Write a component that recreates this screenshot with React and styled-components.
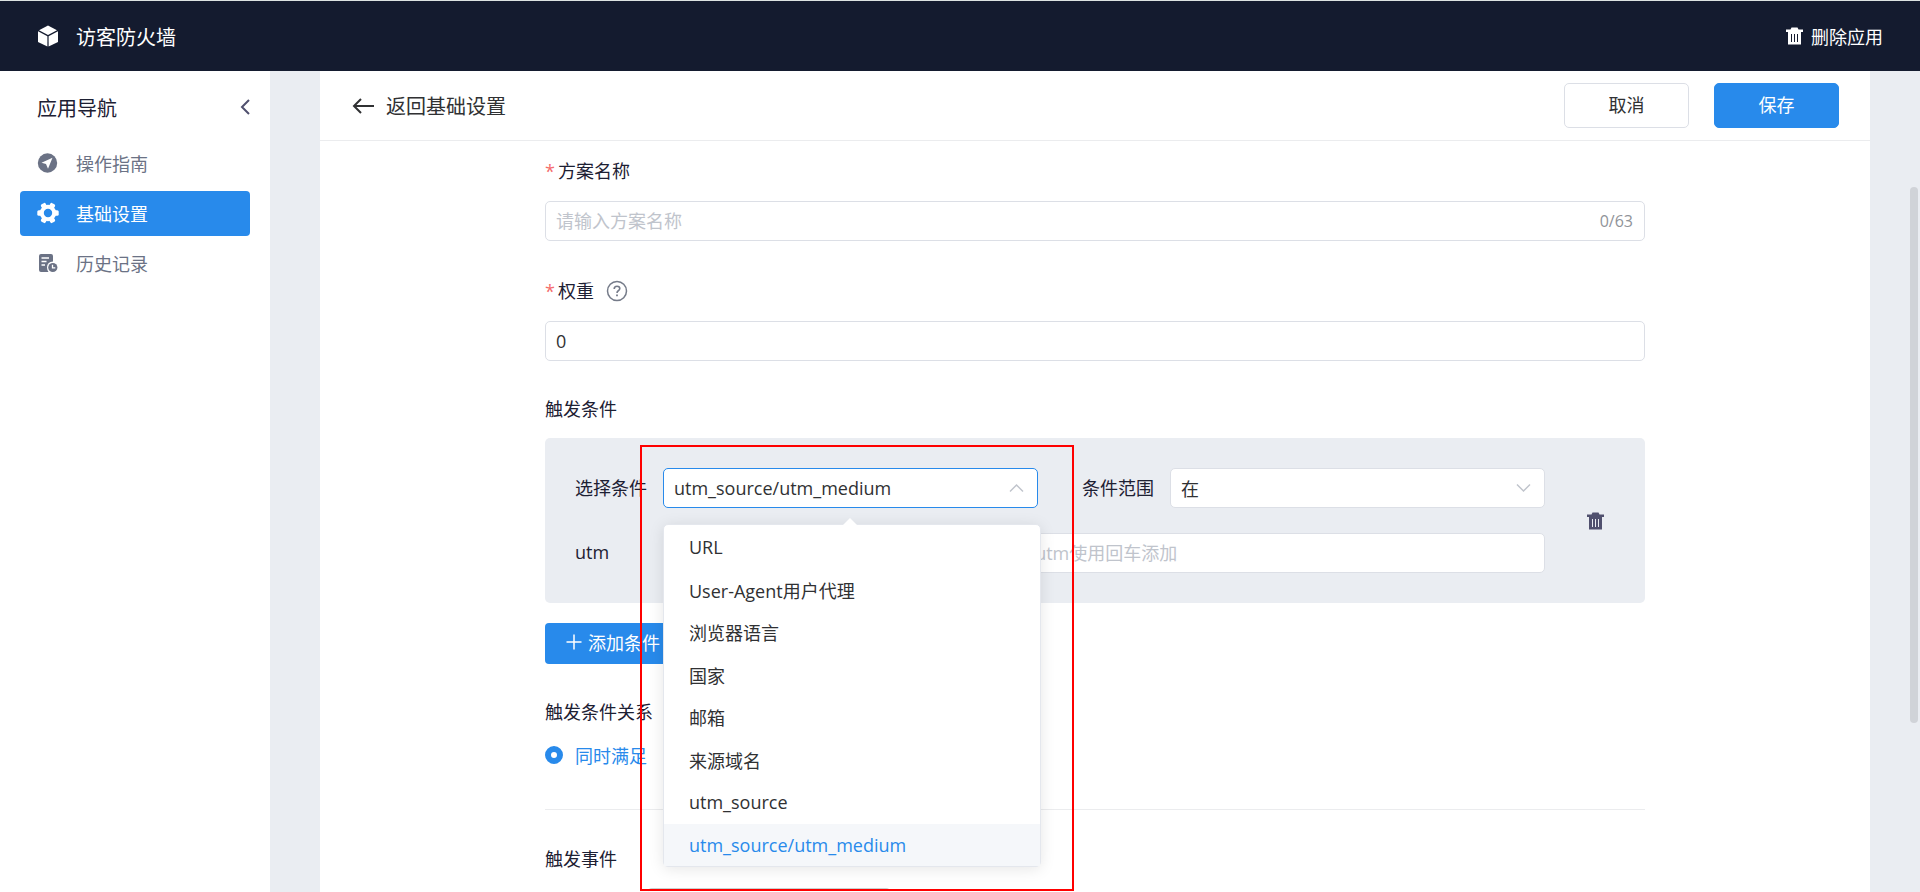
import React, { useState } from 'react';

import styled, { createGlobalStyle } from 'styled-components';

const GlobalStyle = createGlobalStyle`
  * {
    box-sizing: border-box;
  }

  body {
    margin: 0;
    overflow: hidden;
  }

  body, button, input {
    font-family: "Open Sans", "Noto Sans CJK SC", sans-serif;
    font-size: 18px;
    font-weight: 370;
    color: #1d2033;
  }
`;

const Page = styled.div`
  display: flex;
  flex-direction: column;
  height: 100vh;
  background: #eaedf2;
`;

const TopBar = styled.header`
  display: flex;
  flex: none;
  align-items: center;
  justify-content: space-between;
  height: 71px;
  padding: 0 37px;
  border-top: 1px solid #dde3e2;
  background: #141b2f;
  color: #fff;
`;

const Brand = styled.div`
  display: flex;
  align-items: center;
  gap: 17px;
  font-size: 20px;
`;

const PlainButton = styled.button`
  display: flex;
  align-items: center;
  gap: 8px;
  padding: 0;
  border: none;
  background: transparent;
  color: ${(props) => props.$color || 'inherit'};
  cursor: pointer;
`;

const Body = styled.div`
  display: flex;
  flex: 1;
  min-height: 0;
`;

const Sidebar = styled.nav`
  flex: none;
  width: 270px;
  padding: 17px 20px 0;
  background: #fff;
`;

const SidebarHead = styled.div`
  display: flex;
  align-items: center;
  justify-content: space-between;
  height: 38px;
  margin-bottom: 15px;
  padding-left: 17px;
  font-size: 20px;
`;

const NavLink = styled.a`
  display: flex;
  align-items: center;
  gap: 17px;
  height: 45px;
  margin-bottom: 5px;
  padding: 0 0 2px 17px;
  border-radius: 4px;
  background: ${(props) => (props.$active ? '#288aeb' : 'transparent')};
  color: ${(props) => (props.$active ? '#fff' : '#6b7285')};
  text-decoration: none;
`;

const Content = styled.main`
  position: relative;
  flex: 1;
  min-width: 0;
  padding: 0 50px;
`;

const Card = styled.section`
  height: 100%;
  overflow: hidden;
  background: #fff;
`;

const CardHead = styled.div`
  display: flex;
  align-items: center;
  justify-content: space-between;
  height: 70px;
  padding: 0 31px 0 32px;
  border-bottom: 1px solid #ebecee;
`;

const BackLink = styled.a`
  display: flex;
  align-items: center;
  gap: 12px;
  font-size: 20px;
  color: #303133;
  text-decoration: none;
`;

const Actions = styled.div`
  display: flex;
  gap: 25px;
`;

const ActionButton = styled.button`
  width: 125px;
  height: 45px;
  padding: 0 0 4px;
  border: 1px solid ${(props) => (props.$primary ? '#288aeb' : '#dcdfe6')};
  border-radius: 5px;
  background: ${(props) => (props.$primary ? '#288aeb' : '#fff')};
  color: ${(props) => (props.$primary ? '#fff' : '#303133')};
`;

const Form = styled.form`
  max-width: 1100px;
  margin: 0 auto;
  padding-top: 15px;
`;

const Field = styled.div`
  margin-bottom: ${(props) => props.$gap || 35}px;
`;

const LabelRow = styled.div`
  display: flex;
  align-items: center;
  gap: 12px;
  height: 30px;
  margin-bottom: 15px;
`;

const Label = styled.label`
  line-height: 30px;
`;

const Required = styled.span`
  margin-right: 3px;
  color: #f56c6c;
`;

const InputBox = styled.div`
  display: flex;
  flex: ${(props) => props.$flex || 'none'};
  align-items: center;
  min-width: 0;
  height: 40px;
  padding: 0 11px 0 10px;
  border: 1px solid ${(props) => (props.$focused ? '#288aeb' : '#dcdfe6')};
  border-radius: 5px;
  background: #fff;
  color: #c0c4cc;
`;

const TextInput = styled.input`
  flex: 1;
  min-width: 0;
  padding: 0;
  border: none;
  outline: none;
  background: transparent;
  color: #303133;

  &::placeholder {
    color: #c0c4cc;
  }
`;

const Counter = styled.span`
  font-size: 16px;
  color: #909399;
`;

const Conditions = styled.div`
  display: flex;
  align-items: center;
  gap: 42px;
  height: 165px;
  margin-bottom: 20px;
  padding: 0 41px 0 30px;
  border-radius: 5px;
  background: #eaedf2;
`;

const ConditionRows = styled.div`
  display: flex;
  flex: 1;
  flex-direction: column;
  gap: 25px;
`;

const ConditionRow = styled.div`
  display: flex;
  align-items: center;
`;

const ConditionLabel = styled.label`
  flex: none;
  width: 88px;
  padding-bottom: 2px;
`;

const SelectWrap = styled.div`
  position: relative;
  display: flex;
  flex: 1;
  margin-right: ${(props) => props.$gap || 0}px;
`;

const Menu = styled.ul`
  position: absolute;
  z-index: 2;
  top: 56px;
  left: 0;
  display: flex;
  flex-direction: column;
  width: 378px;
  height: 343px;
  margin: 0;
  padding: 1px 0 0;
  border: 1px solid #e4e7ed;
  border-radius: 5px;
  background: #fff;
  box-shadow: 0 2px 15px rgba(0, 0, 0, 0.1);
  list-style: none;

  &::before {
    content: '';
    position: absolute;
    top: -7px;
    left: 178px;
    border: 8px solid transparent;
    border-top: none;
    border-bottom-color: #fff;
  }
`;

const Option = styled.li`
  display: flex;
  flex: 1;
  align-items: center;
  padding: 0 25px;
  background: ${(props) => (props.$selected ? '#f5f7fa' : 'transparent')};
  color: ${(props) => (props.$selected ? '#288aeb' : '#303133')};
  cursor: pointer;
`;

const AddButton = styled.button`
  display: flex;
  align-items: center;
  gap: 6px;
  height: 41px;
  margin-bottom: 32px;
  padding: 0 21px 3px;
  border: none;
  border-radius: 4px;
  background: #288aeb;
  color: #fff;
`;

const RadioLabel = styled.label`
  display: flex;
  align-items: center;
  gap: 12px;
  height: 28px;
  color: #288aeb;
`;

const Radio = styled.input`
  appearance: none;
  width: 18px;
  height: 18px;
  margin: 0;
  border: 6px solid #288aeb;
  border-radius: 50%;
  background: #fff;
`;

const Divider = styled.hr`
  height: 1px;
  margin: 40px 0 33px;
  border: none;
  background: #ebecee;
`;

const Highlight = styled.div`
  position: absolute;
  z-index: 3;
  top: -23px;
  left: -23px;
  width: 434px;
  height: 446px;
  border: 2px solid #f00;
  pointer-events: none;
`;

const StatusBar = styled.div`
  position: absolute;
  bottom: 0;
  left: 378px;
  width: 242px;
  height: 4px;
  border-top: 1px solid #c9d0d0;
  border-radius: 4px 4px 0 0;
`;

const ScrollThumb = styled.div`
  position: absolute;
  top: 116px;
  right: 2px;
  width: 8px;
  height: 536px;
  border-radius: 4px;
  background: #d0d3d8;
`;

const CubeIcon = () => (
  <svg width="22" height="22" viewBox="0 0 22 22" fill="currentColor">
    <path d="M11 0.5 20 5.2 11 10 2 5.2Z" />
    <path d="M1 6.3 10.4 11.3V21.5L1 17Z" />
    <path d="M21 6.3 11.6 11.3V21.5L21 17Z" />
  </svg>
);

const TrashIcon = () => (
  <svg width="17" height="18" viewBox="0 0 17 18" fill="currentColor" fillRule="evenodd">
    <path d="M5.500 0.500H11.500L12.500 2.500H17V5H15V17.500H2V5H0V2.500H4.500ZM5 7V15H6V7ZM8 7V15H9V7ZM11 7V15H12V7Z" />
  </svg>
);

const GuideIcon = () => (
  <svg width="22" height="22" viewBox="0 0 22 22">
    <circle cx="10.5" cy="11" r="9.7" fill="currentColor" />
    <path d="M15.5 5.8 4.5 10.8 9 12 11 16.8Z" fill="#fff" />
  </svg>
);

const GearIcon = () => (
  <svg width="22" height="22" viewBox="0 0 22 22">
    <circle cx="11" cy="11" r="6.2" fill="none" stroke="currentColor" strokeWidth="4" />
    <g fill="currentColor">
      {[30, 90, 150, 210, 270, 330].map((angle) => (
        <rect key={angle} x="8.3" y="0.300" width="5.400" height="5" rx="1.500" transform={`rotate(${angle} 11 11)`} />
      ))}
    </g>
  </svg>
);

const HistoryIcon = () => (
  <svg width="22" height="22" viewBox="0 0 22 22">
    <path d="M4 2H14Q16 2 16 4V9.500Q10 10 10 15.500Q10 18 11.500 20H4Q2 20 2 18V4Q2 2 4 2Z" fill="currentColor" />
    <path d="M4.500 6H12M4.500 9.500H9.500M4.500 13H8" stroke="#fff" strokeWidth="1.300" />
    <circle cx="15.800" cy="15.500" r="4.600" fill="currentColor" />
    <path d="M15.500 12.800V15.800H18.300" fill="none" stroke="#fff" strokeWidth="1.300" />
  </svg>
);

const CollapseIcon = () => (
  <svg width="10" height="16" viewBox="0 0 10 16" fill="none" stroke="currentColor" strokeWidth="2">
    <path d="M9 1 2 8 9 15" />
  </svg>
);

const ArrowIcon = () => (
  <svg width="22" height="16" viewBox="0 0 22 16" fill="none" stroke="currentColor" strokeWidth="2">
    <path d="M9 1 2 8 9 15M2 8H22" />
  </svg>
);

const HelpIcon = () => (
  <svg width="22" height="22" viewBox="0 0 22 22" fill="none" stroke="#757b89">
    <circle cx="11" cy="11" r="9.500" strokeWidth="1.500" />
    <path d="M8.200 9Q8.200 6.300 11 6.300Q13.800 6.300 13.800 8.600Q13.800 9.800 12.300 10.700Q11 11.500 11 13" strokeWidth="1.600" />
    <path d="M11 14.500V16.200" strokeWidth="1.800" />
  </svg>
);

const ChevronIcon = ({ up }) => (
  <svg width="18" height="10" viewBox="0 0 18 10" fill="none" stroke="currentColor" strokeWidth="1.500">
    <path d={up ? 'M2 8.500 8.500 2 15 8.500' : 'M2 1.500 8.500 8 15 1.500'} />
  </svg>
);

const PlusIcon = () => (
  <svg width="16" height="16" viewBox="0 0 16 16" stroke="currentColor" strokeWidth="1.500">
    <path d="M8 0.500V15.500M0.500 8H15.500" />
  </svg>
);

const navItems = [
  { name: '操作指南', icon: GuideIcon },
  { name: '基础设置', icon: GearIcon },
  { name: '历史记录', icon: HistoryIcon },
];

const options = [
  'URL',
  'User-Agent用户代理',
  '浏览器语言',
  '国家',
  '邮箱',
  '来源域名',
  'utm_source',
  'utm_source/utm_medium',
];

const App = () => {
  const [name, setName] = useState('');
  const [weight, setWeight] = useState('0');
  const [condition, setCondition] = useState('utm_source/utm_medium');
  const [open, setOpen] = useState(true);

  const pick = (option) => {
    setCondition(option);
    setOpen(false);
  };

  return (
    <Page>
      <GlobalStyle />
      <TopBar>
        <Brand>
          <CubeIcon />
          访客防火墙
        </Brand>
        <PlainButton type="button">
          <TrashIcon />
          删除应用
        </PlainButton>
      </TopBar>
      <Body>
        <Sidebar>
          <SidebarHead>
            应用导航
            <PlainButton type="button" aria-label="收起" $color="#50506e">
              <CollapseIcon />
            </PlainButton>
          </SidebarHead>
          {navItems.map(({ name: title, icon: Icon }) => (
            <NavLink key={title} href="#" $active={title === '基础设置'}>
              <Icon />
              {title}
            </NavLink>
          ))}
        </Sidebar>
        <Content>
          <Card>
            <CardHead>
              <BackLink href="#">
                <ArrowIcon />
                返回基础设置
              </BackLink>
              <Actions>
                <ActionButton type="button">取消</ActionButton>
                <ActionButton type="button" $primary>保存</ActionButton>
              </Actions>
            </CardHead>
            <Form>
              <Field>
                <LabelRow>
                  <Label htmlFor="name">
                    <Required>*</Required>
                    方案名称
                  </Label>
                </LabelRow>
                <InputBox>
                  <TextInput
                    id="name"
                    maxLength={63}
                    placeholder="请输入方案名称"
                    value={name}
                    onChange={(e) => setName(e.target.value)}
                  />
                  <Counter>{`${name.length}/63`}</Counter>
                </InputBox>
              </Field>
              <Field $gap={32}>
                <LabelRow>
                  <Label htmlFor="weight">
                    <Required>*</Required>
                    权重
                  </Label>
                  <HelpIcon />
                </LabelRow>
                <InputBox>
                  <TextInput id="weight" value={weight} onChange={(e) => setWeight(e.target.value)} />
                </InputBox>
              </Field>
              <LabelRow>触发条件</LabelRow>
              <Conditions>
                <ConditionRows>
                  <ConditionRow>
                    <ConditionLabel htmlFor="condition">选择条件</ConditionLabel>
                    <SelectWrap $gap={44}>
                      <InputBox $flex="1" $focused={open}>
                        <TextInput
                          id="condition"
                          role="combobox"
                          aria-expanded={open}
                          aria-controls="condition-menu"
                          readOnly
                          value={condition}
                          onClick={() => setOpen(!open)}
                        />
                        <ChevronIcon up={open} />
                      </InputBox>
                      {open && (
                        <Menu id="condition-menu" role="listbox">
                          {options.map((option) => (
                            <Option
                              key={option}
                              role="option"
                              aria-selected={option === condition}
                              $selected={option === condition}
                              onClick={() => pick(option)}
                            >
                              {option}
                            </Option>
                          ))}
                        </Menu>
                      )}
                      <Highlight />
                    </SelectWrap>
                    <ConditionLabel htmlFor="range">条件范围</ConditionLabel>
                    <SelectWrap>
                      <InputBox $flex="1">
                        <TextInput id="range" role="combobox" aria-expanded="false" readOnly value="在" />
                        <ChevronIcon />
                      </InputBox>
                    </SelectWrap>
                  </ConditionRow>
                  <ConditionRow>
                    <ConditionLabel htmlFor="utm">utm</ConditionLabel>
                    <InputBox $flex="1">
                      <TextInput id="utm" placeholder="请输入utm_source/utm_medium的值，多个utm使用回车添加" />
                    </InputBox>
                  </ConditionRow>
                </ConditionRows>
                <PlainButton type="button" aria-label="删除" $color="#50506e">
                  <TrashIcon />
                </PlainButton>
              </Conditions>
              <AddButton type="button">
                <PlusIcon />
                添加条件
              </AddButton>
              <LabelRow>触发条件关系</LabelRow>
              <RadioLabel>
                <Radio type="radio" name="relation" defaultChecked />
                同时满足
              </RadioLabel>
              <Divider />
              <LabelRow>触发事件</LabelRow>
            </Form>
          </Card>
          <StatusBar />
          <ScrollThumb />
        </Content>
      </Body>
    </Page>
  );
};

export default App;
